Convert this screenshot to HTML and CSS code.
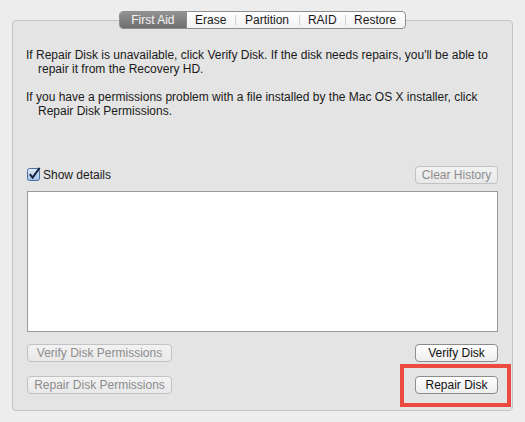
FILE: index.html
```html
<!DOCTYPE html>
<html>
<head>
<meta charset="utf-8">
<link rel="stylesheet" href="styles.css">
</head>
<body>
<div class="panel">
  <div class="tabs">
    <div class="tab selected">First Aid</div>
    <div class="tab">Erase</div>
    <div class="tab sep">Partition</div>
    <div class="tab sep">RAID</div>
    <div class="tab sep">Restore</div>
  </div>
  <div class="content">
    <p class="info">If Repair Disk is unavailable, click Verify Disk. If the disk needs repairs, you'll be able to repair it from the Recovery HD.</p>
    <p class="info">If you have a permissions problem with a file installed by the Mac OS X installer, click Repair Disk Permissions.</p>
    <div class="row details-row">
      <label class="check">
        <svg class="checkbox" width="14" height="14" viewBox="0 0 14 14">
          <defs>
            <linearGradient id="cb" x1="0" y1="0" x2="0" y2="1">
              <stop offset="0" stop-color="#e4eefa"/>
              <stop offset="1" stop-color="#9dbde4"/>
            </linearGradient>
          </defs>
          <rect x="0.5" y="1.5" width="12" height="12" rx="2" fill="url(#cb)" stroke="#4c6f9e"/>
          <path d="M2.8 7.2 L5.6 10.6 L12.6 0.8" fill="none" stroke="#14243f" stroke-width="2"/>
        </svg>
        <span>Show details</span>
      </label>
      <button class="btn disabled">Clear History</button>
    </div>
    <div class="log"></div>
    <div class="row actions">
      <button class="btn wide disabled">Verify Disk Permissions</button>
      <button class="btn">Verify Disk</button>
    </div>
    <div class="row actions second">
      <button class="btn wide disabled">Repair Disk Permissions</button>
      <button class="btn">Repair Disk</button>
    </div>
  </div>
  <div class="highlight"></div>
</div>
</body>
</html>
```
FILE: styles.css
```css
html, body {
  margin: 0;
  padding: 0;
  background: #ededed;
  font-family: "Liberation Sans", Arial, sans-serif;
  font-size: 12px;
  color: #1a1a1a;
}

body {
  padding: 20px 12px 0 12px;
}

.panel {
  position: relative;
  height: 389px;
  border: 1px solid #c4c4c4;
  border-radius: 4px;
  background: #e4e4e4;
}

.tabs {
  display: flex;
  width: 285px;
  height: 16px;
  margin: -10px auto 0 auto;
  border: 1px solid #8f8f8f;
  border-radius: 4px;
  background: linear-gradient(#ffffff, #f1f1f1);
  overflow: hidden;
}

.tab {
  display: flex;
  align-items: center;
  justify-content: center;
  line-height: 16px;
  color: #1a1a1a;
  position: relative;
}

.tab:nth-child(1) { width: 66px; }
.tab:nth-child(2) { width: 48px; }
.tab:nth-child(3) { width: 65px; }
.tab:nth-child(4) { width: 46px; }
.tab:nth-child(5) { width: 60px; }

.tab.sep::before {
  content: "";
  position: absolute;
  left: 0;
  top: 3px;
  bottom: 3px;
  width: 1px;
  background: #cfcfcf;
}

.tab.selected {
  background: linear-gradient(#929292, #6e6e6e);
  color: #f4f4f4;
  border-right: 1px solid #8a8a8a;
}

.content {
  padding: 0 14px 0 14px;
  margin-top: 19px;
}

.info {
  margin: 0 0 14px 0;
  line-height: 14px;
  padding-left: 12px;
  text-indent: -12px;
  margin-left: -1px;
}

.row {
  display: flex;
  justify-content: space-between;
  align-items: center;
}

.details-row {
  margin-top: 48px;
  height: 18px;
}

.check {
  display: flex;
  align-items: center;
  gap: 2px;
}

.checkbox {
  display: block;
  margin-top: -2px;
}

.btn {
  box-sizing: border-box;
  width: 83px;
  height: 18px;
  padding: 0;
  border: 1px solid #8c8c8c;
  border-radius: 4px;
  background: linear-gradient(#ffffff, #eeeeee);
  font-family: "Liberation Sans", Arial, sans-serif;
  font-size: 12px;
  color: #111;
  line-height: 16px;
}

.btn.wide {
  width: 145px;
}

.btn.disabled {
  border-color: #c2c2c2;
  background: linear-gradient(#f2f2f2, #e9e9e9);
  color: #8c8c8c;
}

.log {
  box-sizing: border-box;
  height: 141px;
  margin-top: 7px;
  background: #ffffff;
  border: 1px solid #9a9a9a;
}

.actions {
  margin-top: 12px;
}

.actions.second {
  margin-top: 14px;
}

.highlight {
  position: absolute;
  left: 387px;
  top: 343px;
  width: 111px;
  height: 43px;
  box-sizing: border-box;
  border: 4px solid #ea4a3f;
}
```
